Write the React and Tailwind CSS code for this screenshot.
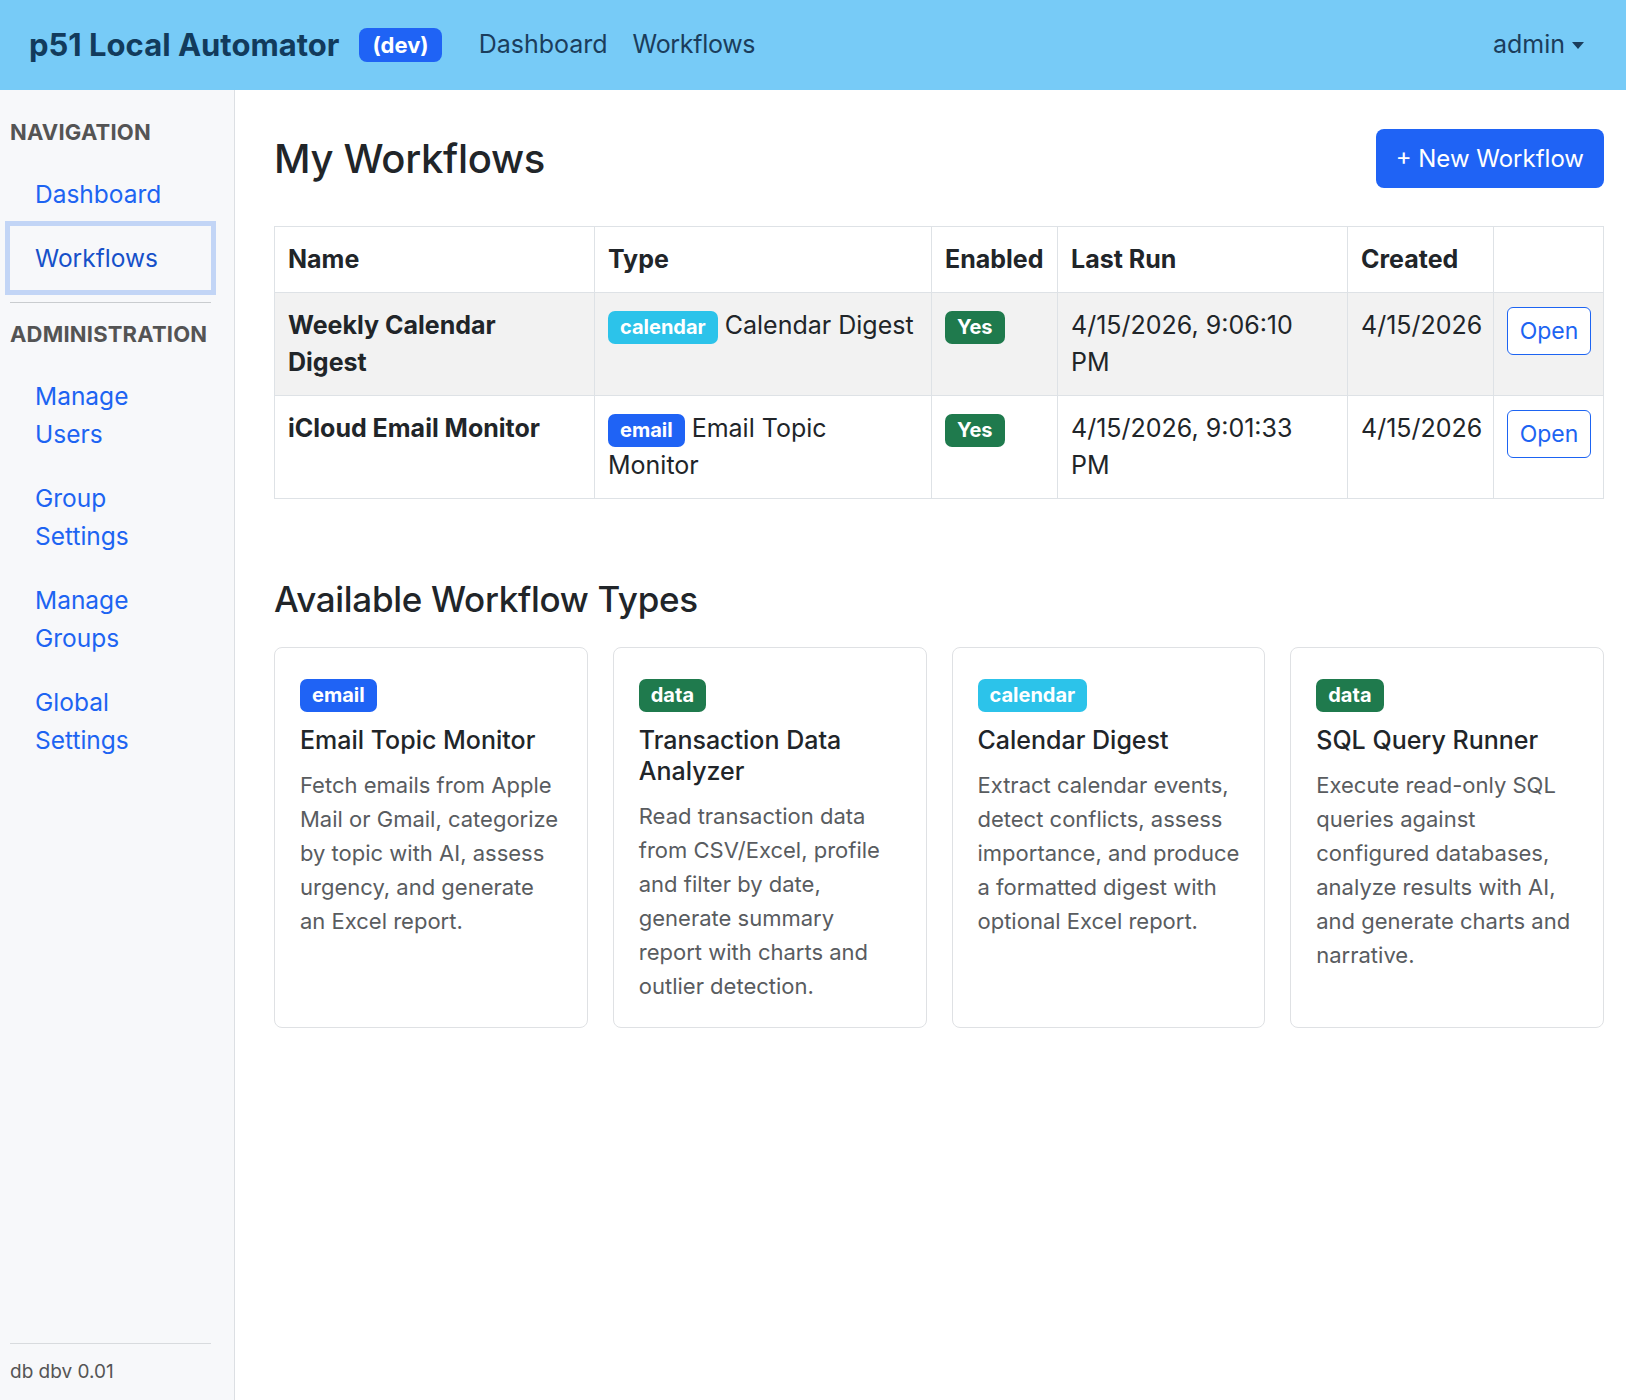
import React from "react";

const workflows = [
  {
    name: "Weekly Calendar Digest",
    badge: "calendar",
    type: "Calendar Digest",
    lastRun: "4/15/2026, 9:06:10 PM",
    created: "4/15/2026",
  },
  {
    name: "iCloud Email Monitor",
    badge: "email",
    type: "Email Topic Monitor",
    lastRun: "4/15/2026, 9:01:33 PM",
    created: "4/15/2026",
  },
];

// description lines are kept as they break in the design
const types = [
  {
    badge: "email",
    title: "Email Topic Monitor",
    desc: [
      "Fetch emails from Apple",
      "Mail or Gmail, categorize",
      "by topic with AI, assess",
      "urgency, and generate",
      "an Excel report.",
    ],
  },
  {
    badge: "data",
    title: "Transaction Data Analyzer",
    desc: [
      "Read transaction data",
      "from CSV/Excel, profile",
      "and filter by date,",
      "generate summary",
      "report with charts and",
      "outlier detection.",
    ],
  },
  {
    badge: "calendar",
    title: "Calendar Digest",
    desc: [
      "Extract calendar events,",
      "detect conflicts, assess",
      "importance, and produce",
      "a formatted digest with",
      "optional Excel report.",
    ],
  },
  {
    badge: "data",
    title: "SQL Query Runner",
    desc: [
      "Execute read-only SQL",
      "queries against",
      "configured databases,",
      "analyze results with AI,",
      "and generate charts and",
      "narrative.",
    ],
  },
];

const badgeColors = {
  email: "bg-[#1f63f5]",
  calendar: "bg-[#2cc3ea]",
  data: "bg-[#1f7a4d]",
};

const Badge = ({ kind, children }) => (
  <span
    className={`${badgeColors[kind]} inline-block rounded-[7px] px-[12px] py-[4px] text-[20px] leading-[25px] font-bold text-white tracking-normal align-baseline`}
  >
    {children}
  </span>
);

const SideLink = ({ children, active }) => (
  <a
    href="#"
    className={`block px-[25px] py-[13px] leading-[38px] text-[24.5px] ${
      active
        ? "text-[#1650c9] ring-[5px] ring-[#c2d5f6]"
        : "text-[#1d64f2]"
    }`}
  >
    {children}
  </a>
);

const Sidebar = () => (
  <aside className="w-[235px] shrink-0 bg-[#f7f8fa] border-r border-[#dcdfe3] flex flex-col pl-[10px] pr-[23px]">
    <div className="pt-[27px] text-[22px] leading-[30px] font-bold text-[#545454] tracking-[0.2px]">
      NAVIGATION
    </div>
    <nav className="mt-[15px] flex flex-col">
      <SideLink>Dashboard</SideLink>
      <SideLink active>Workflows</SideLink>
    </nav>
    <div className="mt-[12px] border-t border-[#c9cccf]" />
    <div className="mt-[16px] text-[22px] leading-[30px] font-bold text-[#545454] tracking-[0.2px]">
      ADMINISTRATION
    </div>
    <nav className="mt-[15px] flex flex-col">
      <SideLink>Manage Users</SideLink>
      <SideLink>Group Settings</SideLink>
      <SideLink>Manage Groups</SideLink>
      <SideLink>Global Settings</SideLink>
    </nav>
    <div className="mt-auto border-t border-[#d8dbde] pt-[13px] pb-[13px] text-[19px] leading-[30px] text-[#555]">
      db dbv 0.01
    </div>
  </aside>
);

const cell = "border border-[#dee2e6] px-[13px] py-[14px] align-top";

export default function App() {
  return (
    <div
      className="h-[1400px] flex flex-col bg-white text-[#212529]"
      style={{ fontFamily: "Inter, 'Noto Sans', sans-serif" }}
    >
      {/* Top bar */}
      <header className="h-[90px] shrink-0 bg-[#77cbf7] flex items-center pl-[29px] pr-[42px]">
        <span className="text-[31px] font-bold text-[#123b5c]">
          p51 Local Automator
        </span>
        <span className="ml-[20px] rounded-[8px] bg-[#1f63f5] px-[13px] h-[34px] flex items-center text-[22px] font-bold text-white">
          (dev)
        </span>
        <a href="#" className="ml-[37px] text-[25px] text-[#1b3d5c]">
          Dashboard
        </a>
        <a href="#" className="ml-[25px] text-[25px] text-[#1b3d5c] tracking-[-0.3px]">
          Workflows
        </a>
        <div className="ml-auto flex items-center gap-[7px] text-[25px] text-[#1b3d5c]">
          admin
          <span className="w-0 h-0 border-l-[6px] border-r-[6px] border-t-[7px] border-l-transparent border-r-transparent border-t-[#1b3d5c]" />
        </div>
      </header>

      <div className="flex flex-1">
        <Sidebar />

        <main className="flex-1 pl-[39px] pr-[22px] pt-[39px]">
          <div className="flex items-center justify-between">
            <h2 className="text-[40px] font-medium leading-[50px] tracking-[-0.3px]">
              My Workflows
            </h2>
            <button className="h-[59px] px-[20px] rounded-[8px] bg-[#1f63f5] text-white text-[24px]">
              + New Workflow
            </button>
          </div>

          <table className="mt-[38px] w-full table-fixed border-collapse text-[25px] leading-[37px]">
            <thead>
              <tr>
                <th className={`w-[320px] ${cell} text-left font-bold`}>Name</th>
                <th className={`w-[337px] ${cell} text-left font-bold`}>Type</th>
                <th className={`w-[126px] ${cell} text-left font-bold`}>Enabled</th>
                <th className={`w-[290px] ${cell} text-left font-bold`}>Last Run</th>
                <th className={`w-[146px] ${cell} text-left font-bold`}>Created</th>
                <th className={cell}></th>
              </tr>
            </thead>
            <tbody>
              {workflows.map((w, i) => (
                <tr key={w.name} className={i === 0 ? "bg-[#f2f2f2]" : "bg-white"}>
                  <td className={`${cell} font-bold`}>
                    <div className="max-w-[262px]">{w.name}</div>
                  </td>
                  <td className={cell}>
                    <div className="max-w-[309px]">
                      <Badge kind={w.badge}>{w.badge}</Badge> {w.type}
                    </div>
                  </td>
                  <td className={cell}>
                    <Badge kind="data">Yes</Badge>
                  </td>
                  <td className={cell}>
                    <div className="max-w-[240px]">{w.lastRun}</div>
                  </td>
                  <td className={cell}>{w.created}</td>
                  <td className={cell}>
                    <button className="h-[48px] w-[84px] rounded-[6px] border border-[#1d64f2] bg-white text-[#1d64f2] text-[23px]">
                      Open
                    </button>
                  </td>
                </tr>
              ))}
            </tbody>
          </table>

          <h4 className="mt-[78px] text-[35px] font-medium leading-[44px] tracking-[-0.3px]">
            Available Workflow Types
          </h4>

          <div className="mt-[26px] grid grid-cols-4 gap-[25px]">
            {types.map((t) => (
              <div
                key={t.title}
                className="rounded-[8px] border border-[#dfe1e4] px-[25px] pt-[31px] pb-[24px]"
              >
                <Badge kind={t.badge}>{t.badge}</Badge>
                <h5 className="mt-[13px] text-[25px] font-medium leading-[31px]">
                  {t.title}
                </h5>
                <p className="mt-[12px] text-[22px] leading-[34px] text-[#595c5f]">
                  {t.desc.map((line) => (
                    <span key={line} className="block whitespace-nowrap">
                      {line}
                    </span>
                  ))}
                </p>
              </div>
            ))}
          </div>
        </main>
      </div>
    </div>
  );
}
